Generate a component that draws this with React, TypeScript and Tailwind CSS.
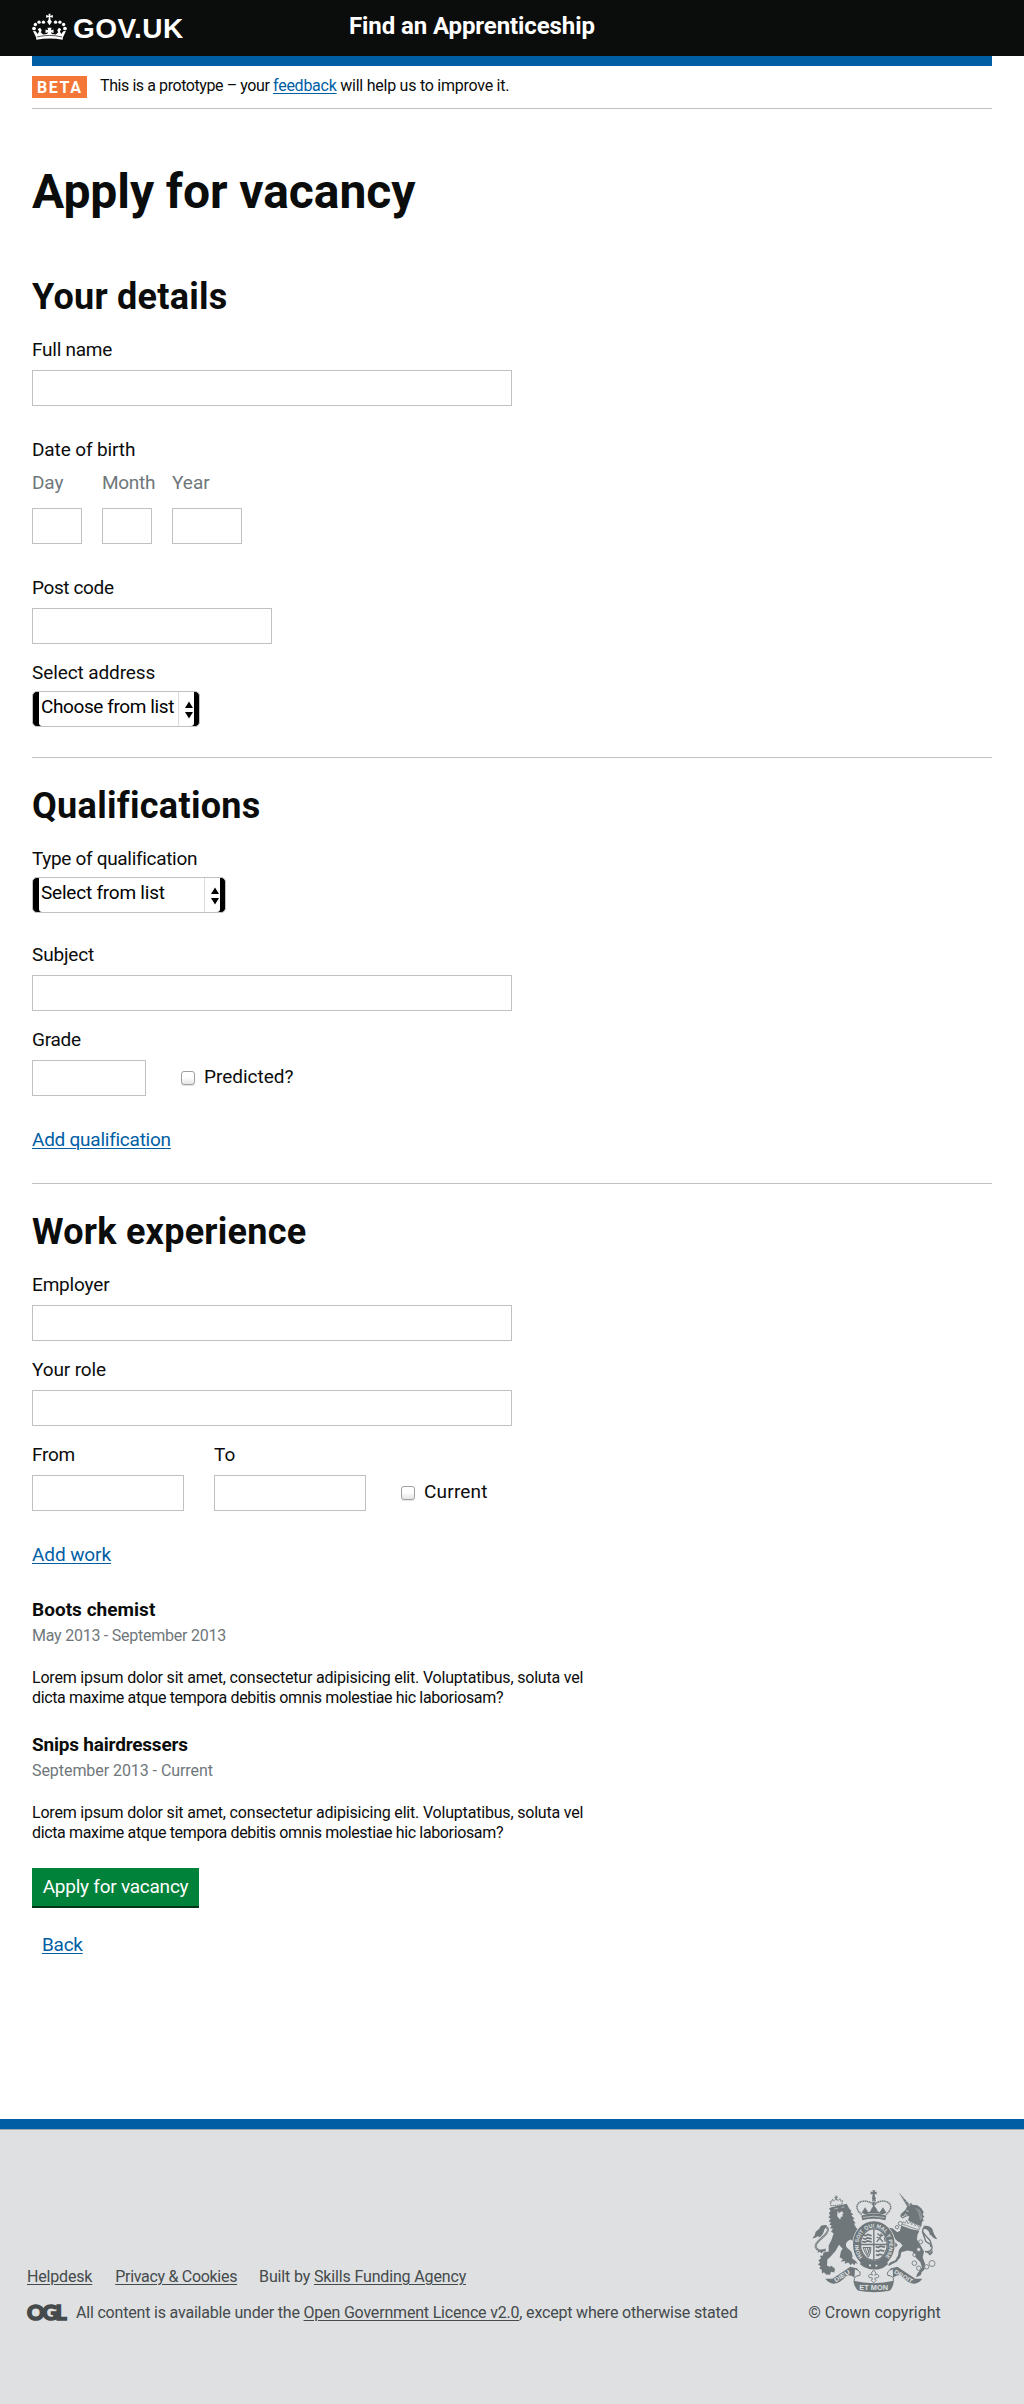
import React from 'react';

function CrownLogo() {
  return (
    <svg viewBox="24 20 104 80" className="h-[27px] w-[35px]" fill="#fff" aria-hidden="true">
      <circle cx="30" cy="66" r="5.5" />
      <circle cx="34" cy="54" r="5" />
      <circle cx="45" cy="47" r="5" />
      <circle cx="58" cy="47" r="5" />
      <circle cx="94" cy="47" r="5" />
      <circle cx="107" cy="47" r="5" />
      <circle cx="118" cy="54" r="5" />
      <circle cx="122" cy="66" r="5.5" />
      <path d="M73 22h6l-1 6 8-2v8l-8-2 1 8 4 6-7 10-7-10 4-6 1-8-8 2v-8l8 2z" />
      <path d="M27 73L35 74L41 82L45 75L41 68L48 64L53 71L50 77L57 84L69 82L72 77L64 79V69L72 71L70 64H82L80 71L88 69V79L80 77L83 82L95 84L102 77L99 71L104 64L111 68L107 75L111 82L117 74L125 73L116 92L115 99Q76 92 37 99L36 92z" />
      <path d="M39 91Q76 82 113 91" stroke="#0b0c0c" strokeWidth="2" fill="none" />
    </svg>
  );
}

function RoyalArms() {
  return (
    <svg viewBox="34 30 378 308" className="h-[103px] w-[126px]" fill="#6f777b" stroke="none" aria-hidden="true">
      {/* central crown */}
      <path d="M215 30h9l-2 6 6-2v9l-6-2 1 9h-8l1-9-6 2v-9l7 2z" />
      <circle cx="219.500" cy="54" r="5.500" />
      <path d="M183 103C156 82 172 60 196 63Q213 66 217 74V58h6v16Q228 65 243 63C267 60 283 82 256 103" fill="none" stroke="#6f777b" strokeWidth="4.500" strokeDasharray="4 1.500" />
      <path d="M219 65v32" stroke="#6f777b" strokeWidth="5" />
      <path d="M182 106q37-12 75 0l-3 14q-35-8-69 0z" />
      <path d="M183 98l6-10 4-7 5 8 5 7 6-3 4-9 7-7 7 7 4 9 6 3 5-7 5-8 4 7 6 10-10 4q-28-6-54 0z" />
      <path d="M187 112q32-8 65 0" stroke="#dee0e2" strokeWidth="2" fill="none" />

      {/* lion */}
      <path d="M91 77l-3-13 5 2 2-9 5 6 6-9 6 8 6-7 2 8 6-2-3 13z" fill="none" stroke="#6f777b" strokeWidth="3" strokeDasharray="4 1.500" />
      <path d="M105 46h3v4h4v3h-4v7h-3v-7h-4v-3h4z" />
      <path d="M90 82L138 71L146 86L152 92L150 96L158 103L152 106L162 116L156 118L165 129L160 131L166 142L178 155L171 157L168 168L175 190L169 198L162 186L150 178C135 184 133 194 139 203L152 214L156 228L154 234L166 243L172 252L165 248L161 255L155 249L150 255L143 247L132 251L134 243L120 244L127 237L117 231L121 213L126 206L115 194L105 212L90 229L80 238L79 257L88 260L92 257L103 266L101 277L91 275L88 284L76 283L70 276L64 280L63 268L56 265L60 258L52 253L58 247L53 240L61 235L58 227L67 226L68 217L84 214L84 196L92 180L99 160L91 154L97 146L88 144L93 136L86 134L91 126L84 124L90 115L83 112L89 104L84 100L90 92L85 86z" />
      <path d="M100 87l13-3M122 82l10-2M111 93l4 7 8-6 5 5-4 4 2 5-5 1-3 8-7-8-1-6" fill="#dee0e2" stroke="#dee0e2" strokeWidth="1.500" />
      <path d="M75 208q-25 8-30-8c-3-20 38-31 37-53q-2-9-14-5" fill="none" stroke="#6f777b" strokeWidth="6" />
      <path d="M75 208q-25 8-30-8c-3-20 38-31 37-53q-2-9-14-5" fill="none" stroke="#dee0e2" strokeWidth="1" />
      <path d="M79 135q-9-2-18 2-4 11-16 18 0 10-10 20 13-1 18-8l1 5q12-3 17-23z" />
      <path d="M54 211l-4 7 9-3 3 5 6-7 8 1-2-6z" />

      {/* unicorn */}
      <path d="M294 36L328 74L320 80z" />
      <path d="M300 48l5-1M305 56l7-1M312 66l7-2M318 73l7-3" stroke="#dee0e2" strokeWidth="1.200" />
      <path d="M330 66L335 74L350 75L362 84L369 96L366 103L371 110L366 114L369 122L364 125L362 138Q340 132 322 120L326 108L318 108L306 115L299 109L300 102L315 88L319 79L328 76z" />
      <path d="M317 92l7 1M304 110l8-3 2-5 6 4" stroke="#dee0e2" strokeWidth="2.500" fill="none" />
      <path d="M345 84q14 12 14 36M353 86q11 13 10 30" stroke="#dee0e2" strokeWidth="1.200" fill="none" />
      <path d="M307 125L314 129L318 120L322 131L329 123L333 134L340 126L343 137L350 131L353 141L361 135L355 149Q330 142 304 131z" fill="#dee0e2" stroke="#6f777b" strokeWidth="2" />
      <path d="M302 136Q328 148 356 152L350 165L349 178L360 196L370 214L366 232L373 250L372 267L363 276L360 285L353 288L346 291L350 280L357 271L364 262L359 246L345 232L336 214L320 211L302 216L299 231L288 245L273 252L267 257L262 255L268 247L284 240L292 226L295 209L306 196L298 187Q284 181 280 169L273 170L279 182L291 194L286 201L278 196L282 190L268 176L266 162L280 166L272 155L262 152L256 157L252 149L259 141L276 145L290 156L298 152z" />
      <path d="M365 153l10 30c9 9 24 8 18 24q-6 10-20 7M389 200c12-22-26-35-23-50q3-12 14-10" fill="none" stroke="#6f777b" strokeWidth="4" />
      <path d="M369 137q16-3 26 9 2 14 15 31-14-1-19-13-4 4-5-7-6-11-17-11z" />
      <path d="M376 214l12 3 7-8 1 9-8 8z" />
      <g fill="#dee0e2" stroke="#6f777b" strokeWidth="2.500">
        <circle cx="299" cy="130" r="6" /><circle cx="289" cy="141" r="5" />
        <circle cx="360" cy="185" r="6" /><circle cx="354" cy="208" r="6" />
        <circle cx="341" cy="224" r="5" /><circle cx="341" cy="249" r="7" />
        <circle cx="354" cy="264" r="6.500" /><circle cx="378" cy="260" r="6.500" />
        <circle cx="394" cy="250" r="9" />
      </g>

      {/* garter and shield */}
      <ellipse cx="219.500" cy="193" rx="52" ry="59" fill="none" stroke="#dee0e2" strokeWidth="25" />
      <ellipse cx="219.500" cy="193" rx="52" ry="59" fill="none" stroke="#6f777b" strokeWidth="21" />
      <defs>
        <path id="garter" d="M186 231A46 53 0 1 1 253 231" />
      </defs>
      <text fontFamily="Liberation Sans" fontWeight="700" fontSize="16" fill="#dee0e2">
        <textPath href="#garter" textLength="234">HONI SOIT QUI MAL Y PENSE</textPath>
      </text>
      <ellipse cx="219.500" cy="193" rx="40" ry="47" fill="#dee0e2" stroke="#6f777b" strokeWidth="4" />
      <path d="M219.500 146v94M180 193h80" stroke="#6f777b" strokeWidth="4" fill="none" />
      <g stroke="#6f777b" strokeWidth="5" fill="none">
        <path d="M188 164l7 3 6-4 12 4M186 174l8 3 7-4 12 3M184 184l9 2 7-4 13 3" />
        <path d="M225 199l8 3 6-4 14 3M225 211l8 3 6-4 12 3M226 223l6 3 6-4 8 3" />
        <path d="M230 160l10 8 8-3M228 171l10 4 9 10M242 160l-4 13-10 12M251 172l3 12" strokeWidth="4" />
        <path d="M187 202h24q-1 20-8 29-10-12-16-29zM193 202q4 15 10 24M200 202l5 18M207 202l-3 18" strokeWidth="3" />
      </g>
      <path d="M182 240q38 24 76 0l4 12q-12 12-30 16l-25-1q-18-4-29-15z" />
      <path d="M205 253h6v5h-6zM224 254h6v5h-6z" fill="#dee0e2" />

      {/* motto ribbon */}
      <path d="M74 296L95 296Q125 276 149 260L170 265L179 285Q166 283 161 292Q150 284 139 286Q115 312 97 311Q82 308 74 296z" />
      <path d="M365 296L344 296Q314 276 290 260L269 265L260 285Q273 283 278 292Q289 284 300 286Q324 312 342 311Q357 308 365 296z" />
      <path d="M163 266q21 7 14 20-19 1-16 16M276 266q-21 7-14 20 19 1 16 16" fill="#dee0e2" stroke="#6f777b" strokeWidth="3" />
      <path d="M158 302q60 14 122 0-3 21-13 30-45 8-94 0-12-10-15-30z" />
      <path d="M219 269l7 10-4 6q9-7 13 2 0 8-11 6l-2 4 5 3-8 8-8-8 5-3-2-4q-11 2-11-6 4-9 13-2l-4-6z" fill="#dee0e2" stroke="#6f777b" strokeWidth="2.500" />
      <g fontFamily="Liberation Sans" fontWeight="700" fill="#dee0e2">
        <text transform="translate(105 307) rotate(-33)" fontSize="18" textLength="53" lengthAdjust="spacingAndGlyphs">DIEU</text>
        <text x="176" y="331" fontSize="22" textLength="86" lengthAdjust="spacingAndGlyphs">ET MON</text>
        <text transform="translate(279 278) rotate(30)" fontSize="17" textLength="62" lengthAdjust="spacingAndGlyphs">DROIT</text>
      </g>
    </svg>
  );
}

const LABEL = 'block text-[19px] leading-[25px] whitespace-nowrap';
const LINK = 'text-[#005ea5] underline underline-offset-[2px] decoration-1';
const FOOT_LINK = 'underline underline-offset-[2px] decoration-1';

function Box({ size }: { size: string }) {
  return <input type="text" className={`block h-9 border border-[#bfc1c3] bg-white outline-none ${size}`} />;
}

function Field({ label, spacing, size, className = '' }: { label: string; spacing: string; size: string; className?: string }) {
  return (
    <div className={className}>
      <label className={`mb-2 ${LABEL} ${spacing}`}>{label}</label>
      <Box size={size} />
    </div>
  );
}

function Select({ text, size, spacing }: { text: string; size: string; spacing: string }) {
  return (
    <div className={`mt-1.5 flex h-9 overflow-hidden rounded-[5px] border border-[#bfc1c3] bg-black ${size}`}>
      <div className="mr-[5px] ml-[6px] flex flex-1 rounded-b-[3px] bg-white">
        <span className={`flex-1 pl-[2px] text-[19px] leading-[30px] whitespace-nowrap text-black ${spacing}`}>{text}</span>
        <span className="flex w-4 items-center justify-end border-l border-[#dcdcdc] pr-px">
          <svg viewBox="0 0 8 18" className="mt-px h-[18px] w-2" fill="#000">
            <path d="M4 .5L8 7H0zM4 17.500L0 11h8z" />
          </svg>
        </span>
      </div>
    </div>
  );
}

function Checkbox({ label, className, spacing }: { label: string; className: string; spacing: string }) {
  return (
    <label className={`flex items-start ${className}`}>
      <span className="mt-[7px] h-[14px] w-[14px] shrink-0 rounded-[3px] border border-[#a0a0a0] bg-gradient-to-b from-white from-45% to-[#e4e4e4] shadow-[0_1px_1px_rgba(0,0,0,0.12)]" />
      <span className={`ml-[9px] text-[19px] leading-[25px] whitespace-nowrap ${spacing}`}>{label}</span>
    </label>
  );
}

function Job({ title, titleSpacing, dates, datesSpacing }: { title: string; titleSpacing: string; dates: string; datesSpacing: string }) {
  return (
    <div className="pb-[24px]">
      <h3 className={`text-[19px] leading-[25px] font-bold ${titleSpacing}`}>{title}</h3>
      <p className={`mt-[4px] text-[16px] leading-[20px] text-[#6f777b] ${datesSpacing}`}>{dates}</p>
      <p className="mt-[22px] text-[16px] leading-[20px] whitespace-nowrap">
        <span className="tracking-[-0.19px]">Lorem ipsum dolor sit amet, consectetur adipisicing elit. Voluptatibus, soluta vel</span>
        <br />
        <span className="tracking-[-0.36px]">dicta maxime atque tempora debitis omnis molestiae hic laboriosam?</span>
      </p>
    </div>
  );
}

const H2 = 'text-[36px] leading-[40px] font-bold whitespace-nowrap';

export default function App() {
  return (
    <div className="flex h-[2404px] w-[1024px] flex-col bg-white font-['Roboto',sans-serif] text-[#0b0c0c]">
      <header className="flex h-14 shrink-0 bg-[#0b0c0c] text-white">
        <div className="ml-8 flex w-[317px]">
          <div className="mt-[13px]"><CrownLogo /></div>
          <span className="mt-[15px] ml-[6px] font-['Liberation_Sans',sans-serif] text-[28px] leading-[28px] font-bold tracking-[0.45px]">GOV.UK</span>
        </div>
        <span className="mt-[11px] text-[24px] leading-[30px] font-bold tracking-[-0.1px] whitespace-nowrap">Find an Apprenticeship</span>
      </header>

      <main className="mx-8 flex-1">
        <div className="h-[10px] bg-[#005ea5]" />
        <div className="flex h-[43px] border-b border-[#bfc1c3] pt-[10px]">
          <span className="h-[22px] w-[55px] bg-[#f47738] pl-[5px] text-[16px] leading-[23px] font-bold tracking-[1.600px] text-white">BETA</span>
          <span className="ml-[13px] text-[16px] leading-[20px] whitespace-nowrap">
            <span className="tracking-[-0.42px]">This is a prototype – your </span>
            <a className={`tracking-[-0.25px] ${LINK}`}>feedback</a>
            <span className="tracking-[-0.25px]"> will help us to improve it.</span>
          </span>
        </div>

        <h1 className="mt-[58px] text-[48px] leading-[50px] font-bold tracking-[-0.07px]">Apply for vacancy</h1>

        <section className="mt-[60px] border-b border-[#bfc1c3] pb-[30px]">
          <h2 className={`${H2} tracking-[0.25px]`}>Your details</h2>
          <Field className="mt-5" label="Full name" spacing="tracking-[-0.24px]" size="w-[480px]" />
          <div className="mt-[31px]">
            <span className={`${LABEL} tracking-[-0.12px]`}>Date of birth</span>
            <div className="mt-2 flex gap-5 text-[#6f777b]">
              <div>
                <span className={`${LABEL} mb-[13px] w-[50px] tracking-[-0.1px]`}>Day</span>
                <Box size="w-[50px]" />
              </div>
              <div>
                <span className={`${LABEL} mb-[13px] w-[50px] tracking-[-0.28px]`}>Month</span>
                <Box size="w-[50px]" />
              </div>
              <div>
                <span className={`${LABEL} mb-[13px] w-[50px]`}>Year</span>
                <Box size="w-[70px]" />
              </div>
            </div>
          </div>
          <Field className="mt-[31px]" label="Post code" spacing="tracking-[-0.38px]" size="w-[240px]" />
          <div className="mt-4">
            <span className={`${LABEL} tracking-[-0.1px]`}>Select address</span>
            <Select text="Choose from list" size="w-[168px]" spacing="tracking-[-0.4px]" />
          </div>
        </section>

        <section className="mt-[28px] border-b border-[#bfc1c3] pb-[31px]">
          <h2 className={`${H2} tracking-[0.3px]`}>Qualifications</h2>
          <div className="mt-5">
            <span className={`${LABEL} tracking-[-0.32px]`}>Type of qualification</span>
            <Select text="Select from list" size="w-[194px]" spacing="tracking-[-0.22px]" />
          </div>
          <Field className="mt-[29px]" label="Subject" spacing="tracking-[-0.15px]" size="w-[480px]" />
          <div className="mt-4 flex">
            <Field label="Grade" spacing="tracking-[-0.25px]" size="w-[114px]" />
            <Checkbox className="mt-[37px] ml-[35px]" label="Predicted?" spacing="tracking-[-0.02px]" />
          </div>
          <a className={`mt-[31px] inline-block text-[19px] leading-[25px] tracking-[-0.25px] align-top ${LINK}`}>Add qualification</a>
        </section>

        <section className="mt-[28px]">
          <h2 className={`${H2} tracking-[0.25px]`}>Work experience</h2>
          <Field className="mt-5" label="Employer" spacing="tracking-[-0.17px]" size="w-[480px]" />
          <Field className="mt-4" label="Your role" spacing="tracking-[-0.12px]" size="w-[480px]" />
          <div className="mt-4 flex">
            <Field label="From" spacing="tracking-[-0.25px]" size="w-[152px]" />
            <Field className="ml-[30px]" label="To" spacing="tracking-[0px]" size="w-[152px]" />
            <Checkbox className="mt-[37px] ml-[35px]" label="Current" spacing="tracking-[0.2px]" />
          </div>
          <a className={`mt-[31px] block w-fit text-[19px] leading-[25px] tracking-[-0.1px] ${LINK}`}>Add work</a>
          <div className="mt-[30px] mb-px">
            <Job title="Boots chemist" titleSpacing="tracking-[0.03px]" dates="May 2013 - September 2013" datesSpacing="tracking-[-0.24px]" />
            <Job title="Snips hairdressers" titleSpacing="tracking-[-0.2px]" dates="September 2013 - Current" datesSpacing="tracking-[-0.06px]" />
          </div>
          <button className="block h-[38px] w-[167px] bg-[#00823b] pb-px text-[19px] leading-[37px] tracking-[-0.24px] whitespace-nowrap text-white shadow-[0_2px_0_#003618]">
            Apply for vacancy
          </button>
          <a className={`mt-[26px] ml-[10px] block w-fit text-[19px] leading-[25px] tracking-[-0.25px] ${LINK}`}>Back</a>
        </section>
      </main>

      <footer className="flex h-[285px] shrink-0 border-t-[10px] border-[#005ea5] bg-[#dee0e2] text-[16px] leading-[20px] text-[#454a4c]">
        <div className="flex w-full border-t border-[#a1acb2]">
          <div className="ml-[27px] w-[781px] pt-[137px]">
            <div className="flex whitespace-nowrap">
              <a className={`w-fit tracking-[-0.18px] ${FOOT_LINK}`}>Helpdesk</a>
              <a className={`ml-[23px] w-fit tracking-[-0.3px] ${FOOT_LINK}`}>Privacy &amp; Cookies</a>
              <span className="ml-[22px] tracking-[-0.15px]">
                Built by <a className={FOOT_LINK}>Skills Funding Agency</a>
              </span>
            </div>
            <div className="mt-4 flex whitespace-nowrap">
              <span className="w-[49px] font-['Lato',sans-serif] text-[21.500px] leading-[18px] font-black tracking-[-2.300px] [-webkit-text-stroke:1.500px_#454a4c]">OGL</span>
              <span className="tracking-[-0.19px]">
                All content is available under the <a className={FOOT_LINK}>Open Government Licence v2.0</a>, except where otherwise stated
              </span>
            </div>
          </div>
          <div className="flex w-[133px] flex-col items-center pt-[60px]">
            <RoyalArms />
            <span className="mt-[10px] whitespace-nowrap">© Crown copyright</span>
          </div>
        </div>
      </footer>
    </div>
  );
}
